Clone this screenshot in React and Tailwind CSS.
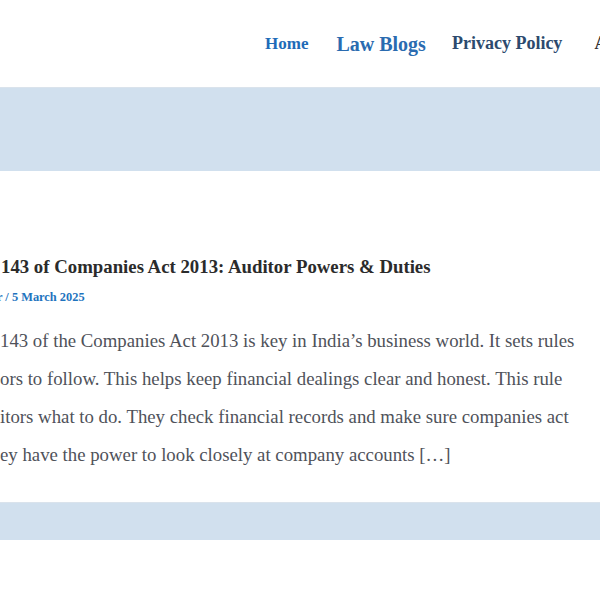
import React from 'react';

const navItems = [
  { label: 'Home', cls: 'text-[17px] text-[#1e6bb8] mr-[28px]' },
  { label: 'Law Blogs', cls: 'text-[20px] text-[#2a6bb0] mr-[26px]' },
  { label: 'Privacy Policy', cls: 'text-[18px] text-[#2c4a6e] mr-[32px]' },
  { label: 'About Us', cls: 'text-[18px] text-[#333333]' },
];

const lines = [
  '143 of the Companies Act 2013 is key in India’s business world. It sets rules',
  'ors to follow. This helps keep financial dealings clear and honest. This rule',
  'itors what to do. They check financial records and make sure companies act',
  'ey have the power to look closely at company accounts […]',
];

export default function App() {
  return (
    <div className="w-[600px] h-[600px] overflow-hidden bg-white font-['Liberation_Serif',serif]">
      {/* header */}
      <header className="h-[87px] flex items-center pl-[265px] whitespace-nowrap">
        {navItems.map((item) => (
          <a key={item.label} className={`font-bold ${item.cls}`}>
            {item.label}
          </a>
        ))}
      </header>

      {/* page title band */}
      <div className="h-[84px] bg-[#d1e0ee] border-t border-[#dae3ec]" />

      {/* post */}
      <article className="pt-[82px] pb-[28px] whitespace-nowrap">
        <h2 className="text-[18.8px] leading-[28px] font-bold text-[#2b2b2b] pl-[1px]">
          143 of Companies Act 2013: Auditor Powers &amp; Duties
        </h2>
        <p className="mt-[8px] text-[12.4px] leading-[16px] font-bold text-[#1e73be] -ml-[3px]">
          r / 5 March 2025
        </p>
        <div className="mt-[17px] text-[18.8px] leading-[38px] text-[#4f525a]">
          {lines.map((l) => (
            <p key={l}>{l}</p>
          ))}
        </div>
      </article>

      <div className="h-[38px] bg-[#d1e0ee] border-t border-[#dae3ec]" />
    </div>
  );
}
